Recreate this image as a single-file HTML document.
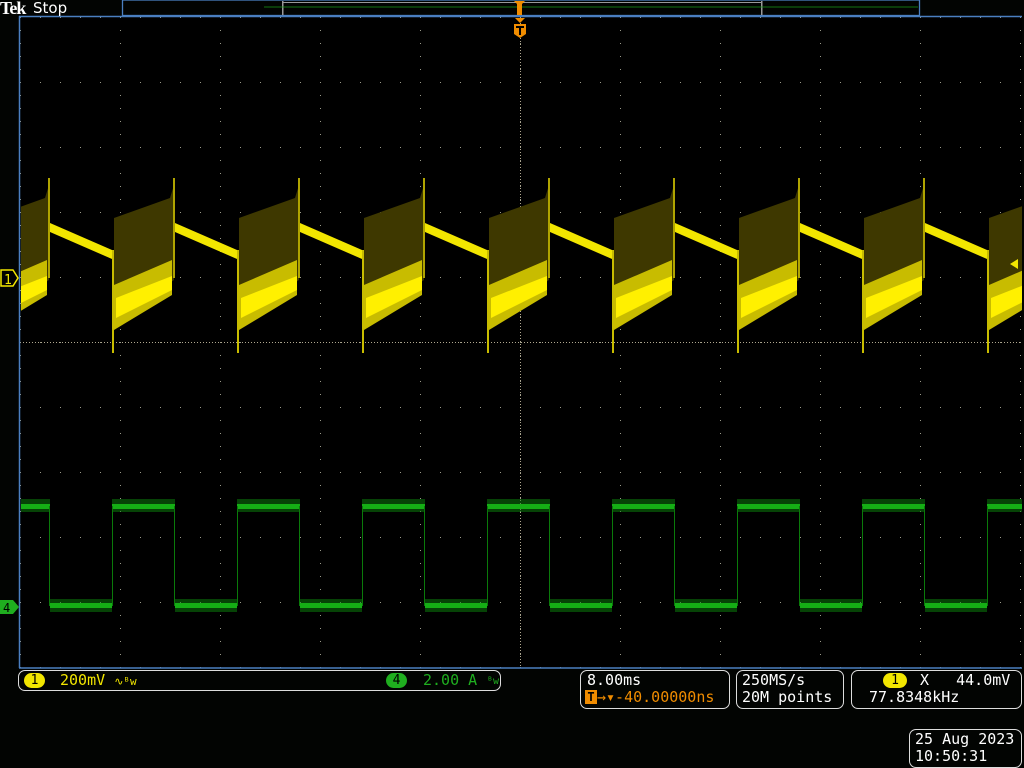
<!DOCTYPE html>
<html><head><style>
body{margin:0;background:#020402;width:1024px;height:768px;overflow:hidden;position:relative;font-family:"DejaVu Sans Mono","Liberation Mono",monospace;}
.t{position:absolute;color:#fff;font-size:15px;white-space:pre;line-height:18px}
.box{position:absolute;border:1.5px solid #ddd;border-radius:7px}
</style></head><body>
<svg width="1024" height="768" style="position:absolute;left:0;top:0">
<defs>
<pattern id="gd" x="20" y="17" width="20" height="65" patternUnits="userSpaceOnUse"><rect x="0" y="0" width="1" height="1" fill="#9a9a8a"/></pattern>
<pattern id="gv" x="20" y="17" width="100" height="13" patternUnits="userSpaceOnUse"><rect x="0" y="0" width="1" height="1" fill="#9a9a8a"/></pattern>
<pattern id="cv" x="520" y="17" width="1" height="3" patternUnits="userSpaceOnUse"><rect x="0" y="0" width="1" height="1" fill="#b0a890"/></pattern>
<pattern id="ch" x="20" y="342" width="3" height="1" patternUnits="userSpaceOnUse"><rect x="0" y="0" width="1" height="1" fill="#b0a890"/></pattern>
<g id="per">
<polygon points="0,223 62,250 62,259 0,232" fill="#f2e600"/>
<polygon points="64,218 120,198 124,185 124,280 64,320" fill="#3e3800"/>
<polygon points="64,285 122,260 122,295 64,330" fill="#c8bc00"/>
<polygon points="66,298 122,276 122,290 66,318" fill="#fff000"/>
<rect x="62" y="250" width="2" height="103" fill="#c8bc00"/>
<rect x="123" y="178" width="2" height="100" fill="#b0a400"/>
<rect x="0" y="603" width="62" height="5" fill="#22ee22"/>
<rect x="0" y="599" width="62" height="13" fill="#0b7a0b" opacity=".55"/>
<rect x="62" y="504" width="63" height="5" fill="#22ee22"/>
<rect x="62" y="499" width="63" height="13" fill="#0b7a0b" opacity=".55"/>
<rect x="62" y="506" width="1" height="100" fill="#0a7a0a"/>
<rect x="124" y="506" width="1" height="100" fill="#0a7a0a"/>
</g>
<clipPath id="pc"><rect x="21" y="17" width="1001" height="650"/></clipPath>
</defs>
<rect x="20" y="17" width="1002" height="651" fill="#000"/>
<rect x="20" y="17" width="1002" height="651" fill="url(#gv)"/>
<rect x="20" y="17" width="1002" height="651" fill="url(#gd)"/>
<rect x="520" y="17" width="1" height="650" fill="url(#cv)"/>
<rect x="20" y="342" width="1002" height="1" fill="url(#ch)"/>
<g clip-path="url(#pc)">
<use href="#per" x="-75"/><use href="#per" x="50"/><use href="#per" x="175"/><use href="#per" x="300"/><use href="#per" x="425"/><use href="#per" x="550"/><use href="#per" x="675"/><use href="#per" x="800"/><use href="#per" x="925"/>
</g>
<line x1="19.5" y1="16" x2="19.5" y2="668" stroke="#4a7fc0" stroke-width="1.5"/>
<line x1="19" y1="16.5" x2="1022" y2="16.5" stroke="#4a7fc0" stroke-width="1.5"/>
<line x1="19" y1="668" x2="1022" y2="668" stroke="#4a7fc0" stroke-width="1.5"/>
<rect x="122.5" y="0" width="797" height="15.5" fill="none" stroke="#4a7fc0" stroke-width="1.3"/>
<rect x="282" y="1" width="1.5" height="14" fill="#999"/><rect x="761" y="1" width="1.5" height="14" fill="#999"/>
<line x1="283" y1="2.5" x2="761" y2="2.5" stroke="#999"/>
<line x1="264" y1="7" x2="918" y2="7" stroke="#1a9a1a" stroke-width="0.8"/>
<path d="M514,1h11l-3,3v11h-5v-11z" fill="#f08c00"/>
<path d="M514,24h12v10l-6,4l-6,-4z" fill="#f08c00"/><path d="M516,26h8v2h-3v7h-2v-7h-3z" fill="#000"/>
<path d="M515,18h10l-5,5z" fill="#f08c00"/>
<path d="M1,270h12l5,8l-5,8h-12z" fill="#000" stroke="#f2e600" stroke-width="1.5"/>
<text x="4" y="284" fill="#f2e600" font-size="13" font-family="DejaVu Sans Mono">1</text>
<path d="M0,600h13l6,7l-6,7h-13z" fill="#1fae1f"/>
<text x="3" y="612" fill="#000" font-size="12" font-family="DejaVu Sans Mono">4</text>
<path d="M1010,264l8,-5v10z" fill="#f2e600"/>
</svg>
<div class="t" style="left:0;top:-1px;font-family:'Liberation Serif',serif;font-weight:bold;font-size:18px;letter-spacing:-1px">Tek</div>
<div class="t" style="left:33px;top:-1px;font-family:'DejaVu Sans',sans-serif;font-size:15px">Stop</div>
<div class="box" style="left:18px;top:670px;width:481px;height:19px"></div>
<div style="position:absolute;left:24px;top:673px;width:21px;height:15px;border-radius:8px;background:#f2e600;color:#000;font-size:13px;text-align:center;line-height:15px">1</div>
<div class="t" style="left:60px;top:671px;color:#f2e600">200mV <span style="font-size:11px">∿ᴮw</span></div>
<div style="position:absolute;left:386px;top:673px;width:21px;height:15px;border-radius:8px;background:#1fae1f;color:#000;font-size:13px;text-align:center;line-height:15px">4</div>
<div class="t" style="left:423px;top:671px;color:#1fae1f">2.00 A</div>
<div class="t" style="left:487px;top:673px;color:#1fae1f;font-size:10px">ᴮw</div>
<div class="box" style="left:580px;top:670px;width:148px;height:37px"></div>
<div class="t" style="left:587px;top:671px">8.00ms</div>
<div style="position:absolute;left:585px;top:690px;width:12px;height:14px;background:#f08c00;color:#000;font-size:12px;line-height:14px;text-align:center;font-weight:bold">T</div>
<div class="t" style="left:597px;top:688px;color:#f08c00">→▾-40.00000ns</div>
<div class="box" style="left:736px;top:670px;width:106px;height:37px"></div>
<div class="t" style="left:742px;top:671px">250MS/s</div>
<div class="t" style="left:742px;top:688px">20M points</div>
<div class="box" style="left:851px;top:670px;width:169px;height:37px"></div>
<div style="position:absolute;left:883px;top:673px;width:24px;height:15px;border-radius:8px;background:#f2e600;color:#000;font-size:13px;text-align:center;line-height:15px">1</div>
<div class="t" style="left:920px;top:671px">X   44.0mV</div>
<div class="t" style="left:869px;top:688px">77.8348kHz</div>
<div class="box" style="left:909px;top:729px;width:111px;height:37px"></div>
<div class="t" style="left:915px;top:730px">25 Aug 2023</div>
<div class="t" style="left:915px;top:747px">10:50:31</div>
</body></html>
